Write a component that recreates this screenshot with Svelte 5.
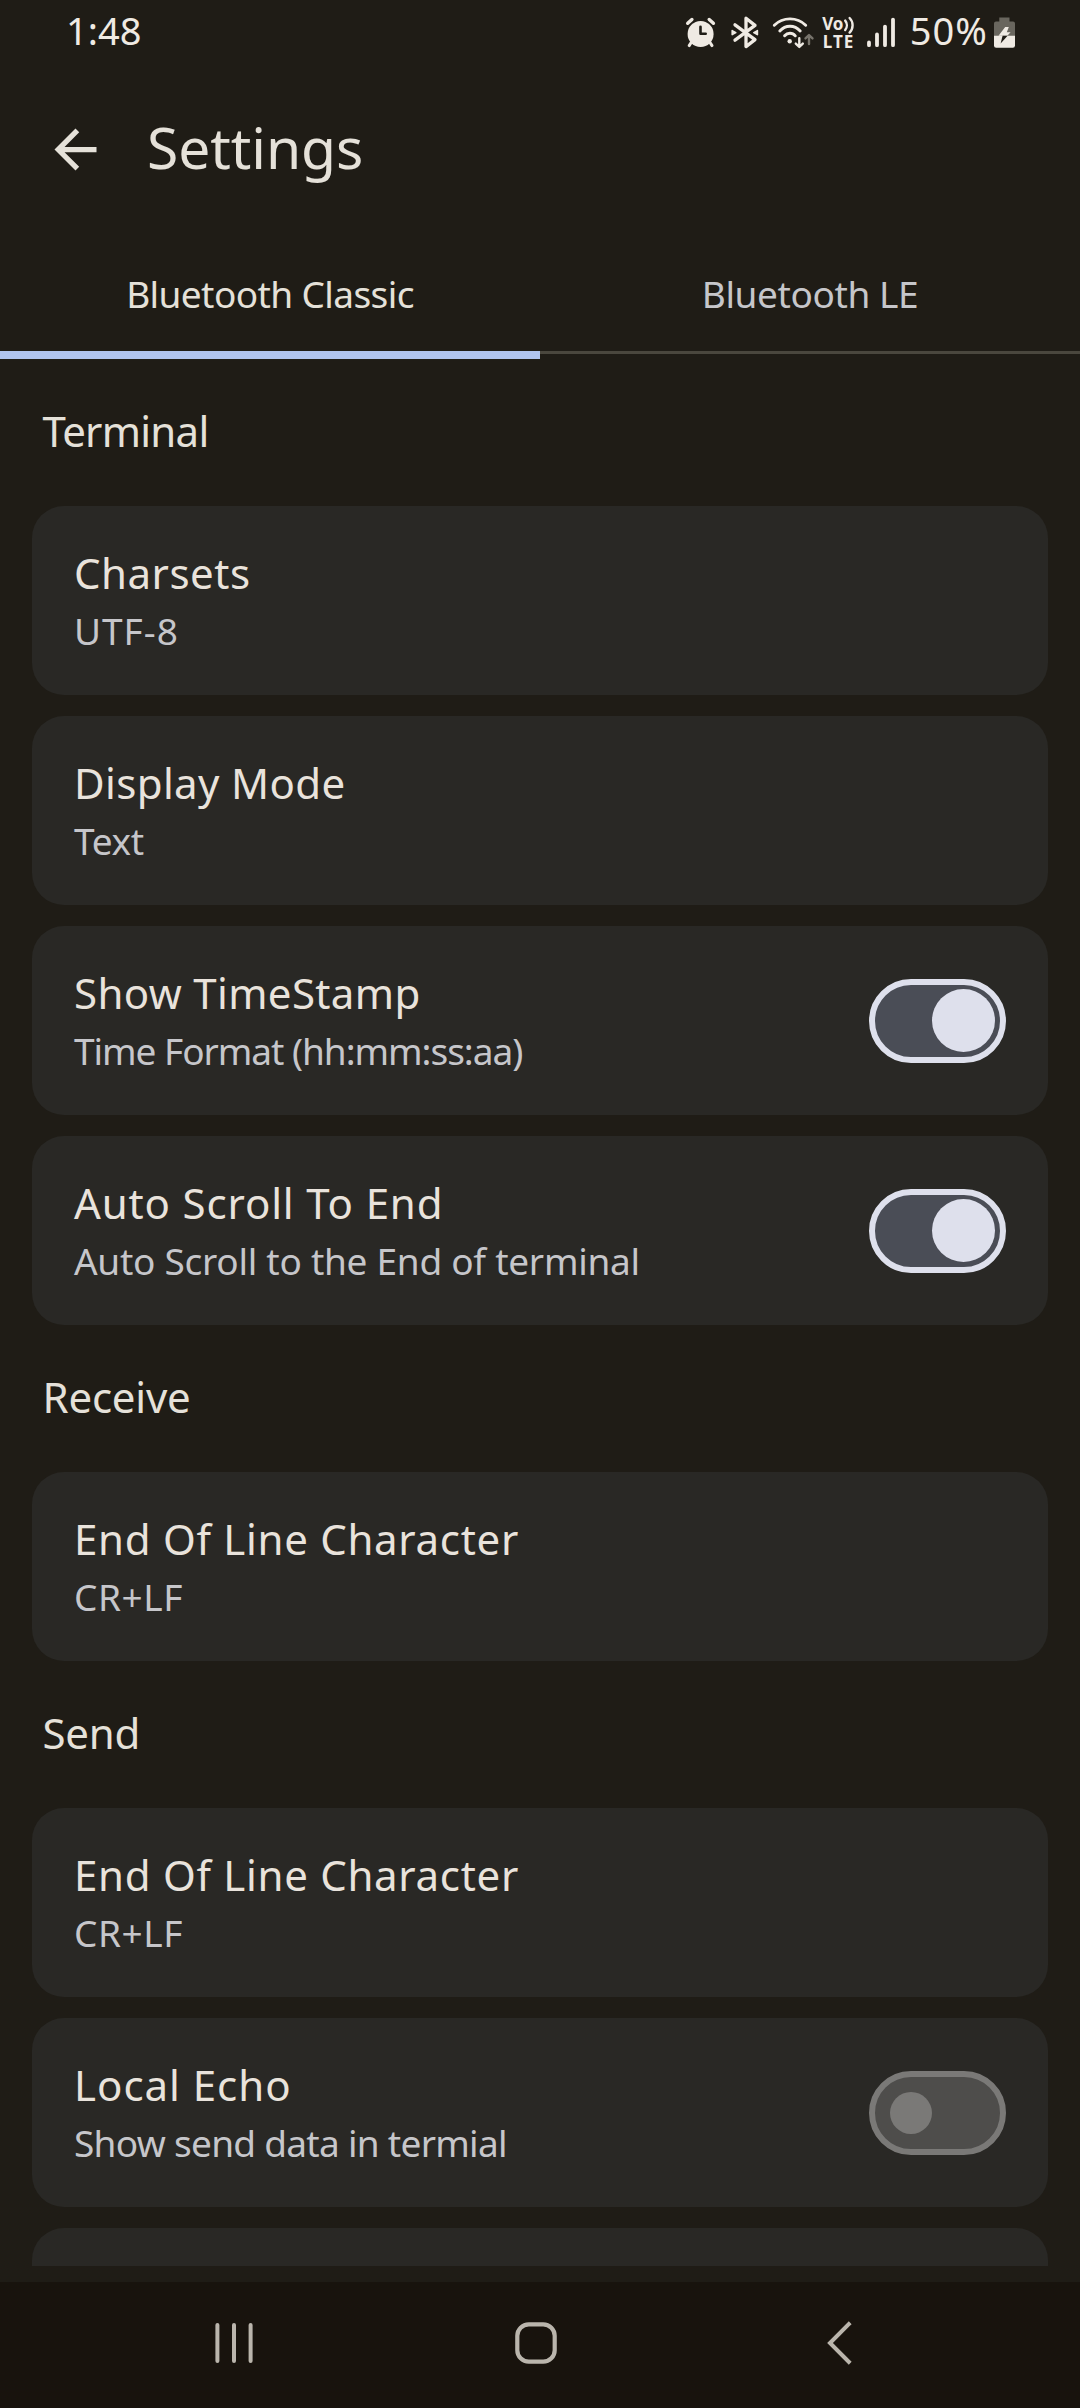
<script>
  // `track` is the letter spacing of a text in px
  const tabs = [
    { label: 'Bluetooth Classic', track: -0.59, active: true },
    { label: 'Bluetooth LE', track: -0.4, active: false },
  ];

  const sections = [
    {
      heading: 'Terminal', track: -0.74,
      items: [
        { title: 'Charsets', track: 0.5, value: 'UTF-8', valueTrack: 1 },
        { title: 'Display Mode', track: 0.36, value: 'Text', valueTrack: -0.35 },
        { title: 'Show TimeStamp', track: 0.36, value: 'Time Format (hh:mm:ss:aa)', valueTrack: -1.04, toggle: 'on' },
        { title: 'Auto Scroll To End', track: 0.86, value: 'Auto Scroll to the End of terminal', valueTrack: -0.27, toggle: 'on' },
      ],
    },
    {
      heading: 'Receive', track: -0.21,
      items: [{ title: 'End Of Line Character', track: 0.71, value: 'CR+LF', valueTrack: 0.6 }],
    },
    {
      heading: 'Send', track: -0.27,
      items: [
        { title: 'End Of Line Character', track: 0.71, value: 'CR+LF', valueTrack: 0.6 },
        { title: 'Local Echo', track: 0.98, value: 'Show send data in termial', valueTrack: -0.71, toggle: 'off' },
        { title: '', track: 0, value: '', valueTrack: 0 },
      ],
    },
  ];
</script>

<div class="screen">
  <header class="status">
    <span class="clock">1:48</span>
    <div class="indicators">
      <svg class="icons" width="220" height="60" viewBox="680 0 220 60" fill="none" stroke="#efeae3" stroke-linecap="round" stroke-linejoin="round">
        <!-- alarm -->
        <circle cx="700.6" cy="34" r="13" fill="#efeae3" stroke="none" />
        <path d="M687.7 23.3l4.2-3.8M713.4 23.3l-4.2-3.8" stroke-width="3.4" />
        <path d="M691.5 42l-2.3 3.6M709.7 42l2.3 3.6" stroke-width="3" />
        <path d="M700.5 26.8v7h5.2" stroke="#1f1c16" stroke-width="2.6" />
        <!-- bluetooth -->
        <path d="M735 24.8L755 39.6L746 46.6V18.2L755 25.4L735 40.2" stroke-width="3.3" />
        <path d="M732.2 30.6l3.6 2-3.6 2zM757.4 30.6l-3.6 2 3.6 2z" fill="#efeae3" stroke-width="1.6" />
        <!-- wifi -->
        <path d="M774.3 25.2C783 16.7 797 16.7 805.7 25.2M779.8 31C785.5 24.6 794.5 24.6 800.2 31M784.6 35.8C787.5 32.4 792.5 32.4 795.3 35.8" stroke-width="2.9" />
        <circle cx="789.7" cy="41.3" r="2.2" fill="#efeae3" stroke="none" />
        <path d="M799.3 38.2v8.4M795.8 43.6l3.5 3.4 3.5-3.4" stroke-width="2.4" />
        <path d="M809 44v-8.6M805.5 38.4l3.5-3.4 3.5 3.4" stroke="#77736b" stroke-width="2.4" />
        <!-- VoLTE -->
        <text class="volte" x="822.3" y="30" textLength="21">Vo</text>
        <text class="volte" x="822.8" y="47.7" textLength="30.4">LTE</text>
        <path d="M845.2 20.6C847.4 23.2 847.4 27.2 845.2 30M849.6 18C853.6 22 853.6 28.4 849.6 32.6" stroke-width="2.4" />
        <!-- signal -->
        <path d="M869 42.4v2.8M877 34.4v10.8M885 26.6v18.6M893 19.6v25.6" stroke-width="3.8" />
      </svg>
      <span class="percent">50%</span>
      <svg class="battery" width="22" height="32" viewBox="994 17 22 32">
        <path d="M999.3 17.6h10.2v4H1013q2 0 2 2V36h-21V23.6q0-2 2-2h3.3z" fill="#69665e" />
        <path d="M994 35.8h21v9.8q0 2.2-2.2 2.2h-16.6q-2.2 0-2.2-2.2z" fill="#efeae3" />
        <path d="M1005.2 27h3.6l-2 5.3h3.8l-3.3 3.5h-8.8z" fill="#efeae3" />
        <path d="M1002.6 35.8h5L1000.6 43.4z" fill="#1f1c16" />
      </svg>
    </div>
  </header>

  <div class="appbar">
    <svg class="back" width="63" height="63" viewBox="0 0 24 24" fill="#e5e1d9">
      <path d="M20 11H7.83l5.59-5.59L12 4l-8 8 8 8 1.41-1.41L7.83 13H20z" />
    </svg>
    <h1>Settings</h1>
  </div>

  <nav class="tabs">
    {#each tabs as tab}
      <div class="tab" class:active={tab.active}>
        <span style:letter-spacing="{tab.track}px">{tab.label}</span>
      </div>
    {/each}
  </nav>

  <main>
    {#each sections as section}
      <section>
        <h2 style:letter-spacing="{section.track}px">{section.heading}</h2>
        <div class="cards">
          {#each section.items as item}
            <div class="card">
              <div class="copy">
                <div class="title" style:letter-spacing="{item.track}px">{item.title}</div>
                <div class="value" style:letter-spacing="{item.valueTrack}px">{item.value}</div>
              </div>
              {#if item.toggle}
                <div class="toggle {item.toggle}"><i></i></div>
              {/if}
            </div>
          {/each}
        </div>
      </section>
    {/each}
  </main>

  <footer>
    <svg width="44" height="46" viewBox="212 2320 44 46" fill="none" stroke="#bab5ac" stroke-width="4" stroke-linecap="round">
      <path d="M217.4 2325v36M234 2325v36M250.6 2325v36" />
    </svg>
    <svg class="home" width="46" height="46" viewBox="513 2320 46 46" fill="none" stroke="#bab5ac" stroke-width="4.2">
      <rect x="517.3" y="2324.3" width="37.4" height="37.4" rx="11.5" />
    </svg>
    <svg width="30" height="46" viewBox="824 2320 30 46" fill="none" stroke="#bab5ac" stroke-width="4" stroke-linecap="square">
      <path d="M848.8 2324.2L830 2343l18.8 18.8" />
    </svg>
  </footer>
</div>

<style>
  :global(body) {
    background: #1f1c16;
  }
  .screen {
    width: 1080px;
    height: 2408px;
    display: flex;
    flex-direction: column;
    overflow: hidden;
    background: #1f1c16;
    color: #e5e1d9;
    font-family: 'Noto Sans', 'Open Sans', sans-serif;
  }
  svg {
    display: block;
    flex: none;
  }
  .status {
    height: 60px;
    display: flex;
    justify-content: space-between;
    padding: 0 64px 0 66px;
    color: #efeae3;
    font-size: 38px;
    line-height: 52px;
  }
  .clock,
  .percent {
    padding-top: 4px;
  }
  .indicators {
    display: flex;
  }
  .percent {
    width: 84.3px;
    margin-left: 9.7px;
    letter-spacing: 1px;
    white-space: nowrap;
  }
  .battery {
    margin-top: 17px;
  }
  .volte {
    font-size: 17px;
    font-weight: 700;
    fill: #efeae3;
    stroke: none;
  }
  .appbar {
    display: flex;
    align-items: flex-start;
    height: 186px;
    box-sizing: border-box;
    padding: 48px 0 0 43.5px;
  }
  .back {
    margin-top: 10px;
  }
  h1 {
    margin: 0 0 0 40.5px;
    font-size: 57px;
    line-height: 78px;
    font-weight: 400;
    letter-spacing: -0.08px;
  }
  .tabs {
    display: flex;
    height: 113px;
  }
  .tab {
    flex: 1;
    height: 108px;
    box-sizing: border-box;
    padding-top: 22px;
    border-bottom: 3px solid #4a473e;
    text-align: center;
    font-size: 37px;
    line-height: 51px;
    color: #c6c6ca;
  }
  .tab.active {
    height: 113px;
    border-bottom: 8px solid #b0c4ee;
    color: #e5e1d9;
  }
  main {
    height: 1907px;
    flex: none;
    overflow: hidden;
    padding: 0 32px;
  }
  section {
    padding-top: 43px;
  }
  h2 {
    margin: 0 0 47px 10.5px;
    font-size: 42px;
    line-height: 57px;
    font-weight: 400;
  }
  .cards {
    display: flex;
    flex-direction: column;
    gap: 21px;
  }
  .card {
    display: flex;
    justify-content: space-between;
    align-items: center;
    height: 189px;
    box-sizing: border-box;
    padding: 0 42px;
    border-radius: 32px;
    background: #292825;
  }
  .copy {
    display: flex;
    flex-direction: column;
    gap: 4px;
    height: 113px;
    white-space: nowrap;
  }
  .title {
    font-size: 42px;
    line-height: 57px;
    color: #e9e3dc;
  }
  .value {
    font-size: 37px;
    line-height: 51px;
    color: #c6c6ca;
  }
  .toggle {
    display: flex;
    align-items: center;
    width: 137px;
    height: 84px;
    box-sizing: border-box;
    border: 6px solid;
    border-radius: 42px;
  }
  .toggle i {
    border-radius: 50%;
  }
  .toggle.on {
    justify-content: flex-end;
    padding-right: 5px;
    border-color: #dee0ec;
    background: #4a4d56;
  }
  .toggle.on i {
    width: 63px;
    height: 63px;
    background: #dee0ec;
  }
  .toggle.off {
    padding-left: 15px;
    border-color: #7a7977;
    background: #4e4d4b;
  }
  .toggle.off i {
    width: 42px;
    height: 42px;
    background: #7a7977;
  }
  footer {
    flex: 1;
    margin-top: 16px;
    display: flex;
    align-items: flex-start;
    padding: 38px 0 0 212px;
    background: #18130d;
  }
  .home {
    margin: 0 265px 0 257px;
  }
</style>
